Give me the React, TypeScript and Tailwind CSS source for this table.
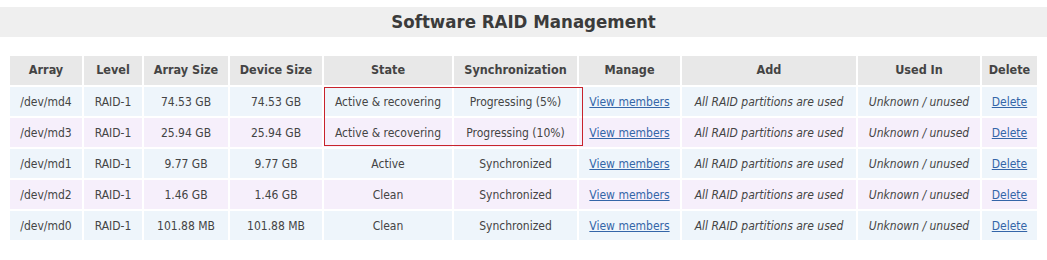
import React from 'react';

type Row = {
  array: string;
  level: string;
  size: string;
  device: string;
  state: string;
  sync: string;
};

const rows: Row[] = [
  { array: '/dev/md4', level: 'RAID-1', size: '74.53 GB', device: '74.53 GB', state: 'Active & recovering', sync: 'Progressing (5%)' },
  { array: '/dev/md3', level: 'RAID-1', size: '25.94 GB', device: '25.94 GB', state: 'Active & recovering', sync: 'Progressing (10%)' },
  { array: '/dev/md1', level: 'RAID-1', size: '9.77 GB', device: '9.77 GB', state: 'Active', sync: 'Synchronized' },
  { array: '/dev/md2', level: 'RAID-1', size: '1.46 GB', device: '1.46 GB', state: 'Clean', sync: 'Synchronized' },
  { array: '/dev/md0', level: 'RAID-1', size: '101.88 MB', device: '101.88 MB', state: 'Clean', sync: 'Synchronized' },
];

const headers = ['Array', 'Level', 'Array Size', 'Device Size', 'State', 'Synchronization', 'Manage', 'Add', 'Used In', 'Delete'];
const widths = [72, 58, 84, 92, 128, 123, 101, 174, 122, 55];

export default function App() {
  return (
    <div className="w-[1047px] h-[260px] bg-white font-['DejaVu_Sans_Condensed','DejaVu_Sans',sans-serif] text-[#444]">
      <div className="pt-[7px]">
        <div className="h-[30px] bg-[#efefef] flex items-center justify-center">
          <h1 className="text-[18.5px] font-bold text-[#3b3b3b]">Software RAID Management</h1>
        </div>
      </div>

      <div className="relative mt-[17px] ml-[8px] w-[1031px]">
        <table className="table-fixed border-separate border-spacing-[2px] w-full text-[12px]">
          <colgroup>
            {widths.map((w, i) => (
              <col key={i} style={{ width: w }} />
            ))}
          </colgroup>
          <thead>
            <tr>
              {headers.map((h) => (
                <th key={h} className="h-[29px] bg-[#e8e8e8] font-bold text-[12.5px] text-[#444] text-center p-0">
                  {h}
                </th>
              ))}
            </tr>
          </thead>
          <tbody>
            {rows.map((r, i) => {
              const bg = i % 2 === 0 ? 'bg-[#eef5fb]' : 'bg-[#f6effb]';
              return (
                <tr key={r.array}>
                  <td className={`h-[29px] ${bg} text-center p-0`}>{r.array}</td>
                  <td className={`${bg} text-center p-0`}>{r.level}</td>
                  <td className={`${bg} text-center p-0`}>{r.size}</td>
                  <td className={`${bg} text-center p-0`}>{r.device}</td>
                  <td className={`${bg} text-center p-0`}>{r.state}</td>
                  <td className={`${bg} text-center p-0`}>{r.sync}</td>
                  <td className={`${bg} text-center p-0`}>
                    <a href="#" className="underline text-[#3465a8]">View members</a>
                  </td>
                  <td className={`${bg} text-center p-0 italic`}>All RAID partitions are used</td>
                  <td className={`${bg} text-center p-0 italic`}>Unknown / unused</td>
                  <td className={`${bg} text-center p-0`}>
                    <a href="#" className="underline text-[#3465a8]">Delete</a>
                  </td>
                </tr>
              );
            })}
          </tbody>
        </table>
        {/* highlight around the two rebuilding arrays */}
        <div className="absolute left-[316px] top-[33px] w-[259px] h-[59px] border border-[#c8232c] pointer-events-none" />
      </div>
    </div>
  );
}
